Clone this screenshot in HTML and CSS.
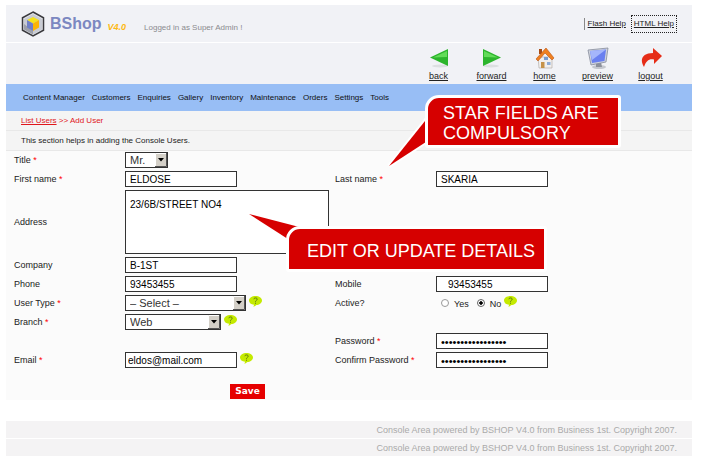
FILE: index.html
```html
<!DOCTYPE html>
<html lang="en">
<head>
<meta charset="utf-8">
<title>BShop - Add User</title>
<link rel="stylesheet" href="styles.css">
</head>
<body>
<svg class="defs" aria-hidden="true">
  <symbol id="tip" viewBox="0 0 13 11">
    <path d="M6.500 0C10 0 13 1.800 13 4.500S10 9 7.500 9L4.500 11 5 8.800C2 8.500 0 6.800 0 4.500 0 1.800 3 0 6.500 0z" fill="#c4ea00"/>
    <path d="M4.800 3.200C5 1.500 8.300 1.500 8.200 3.300 8.100 4.300 6.500 4.500 6.500 5.700M6.500 6.700v1" fill="none" stroke="#5b7a10" stroke-width="1"/>
  </symbol>
  <symbol id="arrow" viewBox="0 0 12 14">
    <path d="M0 0h12v14H0z" fill="#d4d0c8"/>
    <path d="M.5 13V.5H11" fill="none" stroke="#fff"/>
    <path d="M11.500 0v13.500H0" fill="none" stroke="#555"/>
    <path d="M3 5h6L6 8.500z" fill="#000"/>
  </symbol>
</svg>
<header class="header">
  <svg class="logo" viewBox="0 0 24 26" aria-hidden="true">
    <path d="M12 1l10.500 5.800v12.400L12 25 1.500 19.200V6.800z" fill="#e4e6ea" stroke="#3a3a3e" stroke-width="1.500"/>
    <path d="M3 8l9-5 9 5v10.500l-9 5-9-5z" fill="#c9ccd4"/>
    <path d="M3 13l9 7v3.500l-9-5z" fill="#9da0aa"/>
    <path d="M12 6l6 3-6 3.500L6 9z" fill="#f5e31c"/>
    <path d="M6 9l6 3.500V20l-6-3.500z" fill="#6f7fc6"/>
    <path d="M18 9l-6 3.500V20l6-3.500z" fill="#fbb404"/>
  </svg>
  <h1 class="brand">BShop</h1>
  <span class="version">V4.0</span>
  <span class="login">Logged in as Super Admin !</span>
  <div class="help">
    <a href="#flash">Flash Help</a>
    <a class="focused" href="#html">HTML Help</a>
  </div>
</header>
<div class="toolbar">
  <a class="tool" href="#back">
    <svg class="icon" viewBox="0 0 22 22" aria-hidden="true"><ellipse cx="12" cy="19" rx="8" ry="1.500" fill="#dcdfe1"/><path d="M20 2v17L2 10.500z" fill="#2cb52c"/><path d="M19 4v6L5 10.500z" fill="#62dc58"/></svg>back</a>
  <a class="tool" href="#forward">
    <svg class="icon" viewBox="0 0 22 22" aria-hidden="true"><ellipse cx="10" cy="19" rx="8" ry="1.500" fill="#dcdfe1"/><path d="M2 2v17l18-8.500z" fill="#2cb52c"/><path d="M3 4v6l14 .5z" fill="#62dc58"/></svg>forward</a>
  <a class="tool" href="#home">
    <svg class="icon" viewBox="0 0 22 22" aria-hidden="true"><path d="M4 10h14v11H5z" fill="#f1efed" stroke="#b5afaa" stroke-width=".7"/><path d="M5 2h3v5H5z" fill="#a84b14"/><path d="M12 1l8 10-2 2-7-7-7 8-2-2z" fill="#ef8021" stroke="#bb5515" stroke-width=".6"/><path d="M10 10h4v3h-4z" fill="#779bd0"/><path d="M7 15h3.500v6H7z" fill="#c59249"/><path d="M13 15h3.500v3H13z" fill="#8cacd8"/></svg>home</a>
  <a class="tool" href="#preview">
    <svg class="icon" viewBox="0 0 22 22" aria-hidden="true"><ellipse cx="12" cy="20" rx="7" ry="2" fill="#c4c7ce"/><path d="M9 15l5 0 1 5H9z" fill="#8c909b"/><path d="M1 3l20-2-2 14L4 18z" fill="#cfd3dc" stroke="#858b9c" stroke-width=".8"/><path d="M3 4l16-1.500L17.500 14 5 16z" fill="#6a80f0"/><path d="M3 4l16-1.500L5 13z" fill="#a5b6fb"/></svg>preview</a>
  <a class="tool" href="#logout">
    <svg class="icon" viewBox="0 0 22 22" aria-hidden="true"><path d="M13 1l9 8-8 8v-4.500C9 11.500 6 14 4 20-1 12 3 6 13 6z" fill="#e62d17"/></svg>logout</a>
</div>
<nav class="nav">
  <a href="#content">Content Manager</a>
  <a href="#customers">Customers</a>
  <a href="#enquiries">Enquiries</a>
  <a href="#gallery">Gallery</a>
  <a href="#inventory">Inventory</a>
  <a href="#maintenance">Maintenance</a>
  <a href="#orders">Orders</a>
  <a href="#settings">Settings</a>
  <a href="#tools">Tools</a>
</nav>
<p class="strip crumbs"><a href="#list">List Users</a> &gt;&gt; Add User</p>
<p class="strip">This section helps in adding the Console Users.</p>
<main class="main">
  <form class="form">
    <label class="first" for="title">Title <b>*</b></label>
    <div class="field wide"><span class="pick short"><select id="title"><option>Mr.</option></select><svg><use href="#arrow"/></svg></span></div>

    <label class="first" for="fname">First name <b>*</b></label>
    <div class="field"><input id="fname" type="text" value="ELDOSE"></div>
    <label for="lname">Last name <b>*</b></label>
    <div class="field"><input id="lname" type="text" value="SKARIA"></div>

    <label class="first" for="address">Address</label>
    <div class="field wide"><textarea id="address">23/6B/STREET NO4</textarea></div>

    <label class="first" for="company">Company</label>
    <div class="field wide"><input id="company" type="text" value="B-1ST"></div>

    <label class="first" for="phone">Phone</label>
    <div class="field"><input id="phone" type="text" value="93453455"></div>
    <label for="mobile">Mobile</label>
    <div class="field"><input id="mobile" class="indent" type="text" value="93453455"></div>

    <label class="first" for="type">User Type <b>*</b></label>
    <div class="field"><span class="pick long"><select id="type"><option>– Select –</option></select><svg><use href="#arrow"/></svg></span><svg class="tip"><use href="#tip"/></svg></div>
    <span id="active">Active?</span>
    <div class="field radios" role="radiogroup" aria-labelledby="active">
      <input id="yes" type="radio" name="active"><label for="yes">Yes</label>
      <input id="no" type="radio" name="active" checked><label for="no">No</label>
      <svg class="tip"><use href="#tip"/></svg>
    </div>

    <label class="first" for="branch">Branch <b>*</b></label>
    <div class="field wide"><span class="pick medium"><select id="branch"><option>Web</option></select><svg><use href="#arrow"/></svg></span><svg class="tip"><use href="#tip"/></svg></div>

    <label class="third" for="pass">Password <b>*</b></label>
    <div class="field"><input id="pass" type="password" value="*****************"></div>

    <label class="first" for="email">Email <b>*</b></label>
    <div class="field"><input id="email" class="tight" type="text" value="eldos@mail.com"><svg class="tip"><use href="#tip"/></svg></div>
    <label for="confirm">Confirm Password <b>*</b></label>
    <div class="field"><input id="confirm" type="password" value="*****************"></div>

    <div class="actions"><button type="submit">Save</button></div>
  </form>
  <div class="callout star">
    <svg class="tail" viewBox="0 0 40 50" aria-hidden="true"><path d="M0 48L40 -2V22z" fill="#d60000" stroke="#fff" stroke-width="4" paint-order="stroke"/></svg>
    <div class="bubble">STAR FIELDS ARE<br>COMPULSORY</div>
  </div>
  <div class="callout edit">
    <svg class="tail" viewBox="0 0 60 30" aria-hidden="true"><path d="M0 0L58 15 42 27z" fill="#d60000"/></svg>
    <div class="bubble">EDIT OR UPDATE DETAILS</div>
  </div>
</main>
<footer class="footer">
  <p>Console Area powered by BSHOP V4.0 from Business 1st. Copyright 2007.</p>
  <p>Console Area powered by BSHOP V4.0 from Business 1st. Copyright 2007.</p>
</footer>
</body>
</html>
```
FILE: styles.css
```css
* { box-sizing: border-box; }
body {
  margin: 5px 10px 4px 6px;
  background: #fff;
  color: #222;
  font: 9px/12px "Liberation Sans", Arial, sans-serif;
}
h1, p { margin: 0; }
a { color: inherit; }
b { color: #f00; font-weight: normal; }
.defs { display: none; }

.header {
  display: flex;
  align-items: center;
  height: 38px;
  padding: 0 14px 0 15px;
  background: #f1f2f6;
  border-bottom: 1px solid #fff;
  font-size: 8px;
}
.logo { width: 24px; height: 26px; }
.brand { margin-left: 5px; color: #7c88c1; font-size: 16px; line-height: 20px; }
.version { margin: 6px 0 0 6px; color: #fdb913; font-size: 9px; font-weight: bold; font-style: italic; }
.login { margin: 8px 0 0 18px; color: #8b8b8f; }
.help { display: flex; gap: 8px; margin-left: auto; border-left: 1px solid #888; padding: 0 4px 0 3px; }
.help .focused { outline: 1px dotted #222; outline-offset: 2px; }

.toolbar {
  display: flex;
  justify-content: flex-end;
  height: 41px;
  padding: 3px 15px 0 0;
  background: #f1f2f6;
}
.tool { display: flex; flex-direction: column; align-items: center; width: 53px; }
.icon { width: 22px; height: 24px; }

.nav {
  display: flex;
  align-items: center;
  gap: 7px;
  height: 27px;
  padding-left: 17px;
  background: #98bef5;
  color: #111;
  font-size: 8px;
}
.nav a { text-decoration: none; }

.strip { height: 20px; padding: 4px 15px; background: #f4f4f4; border-bottom: 1px solid #e8e8e8; font-size: 8px; }
.crumbs { color: #e0161c; }

.main { position: relative; background: #fbfbfb; }
.form {
  display: grid;
  grid-template-columns: 111px 210px 101px 1fr;
  grid-auto-rows: minmax(16px, auto);
  gap: 3px 0;
  align-items: center;
  padding: 1px 8px;
}
.first { grid-column: 1; }
.third { grid-column: 3; }
.wide { grid-column: span 3; }
.field { display: flex; align-items: center; }
.field input, textarea, select {
  margin: 0;
  border: 1px solid #333;
  border-radius: 0;
  background: #fff;
  color: #000;
  font: 10px/12px "Liberation Sans", Arial, sans-serif;
}
.field input { width: 112px; height: 16px; padding: 0 4px; }
.field .indent { padding-left: 11px; }
.field .tight { padding-left: 2px; }
.field input[type="password"] { padding-top: 2px; font-size: 11px; }
textarea { display: block; width: 204px; height: 64px; padding: 8px 4px; resize: none; }
.pick { display: flex; position: relative; }
.pick select { width: 100%; height: 16px; padding: 0 4px; appearance: none; color: #333; font-size: 11px; }
.pick svg { position: absolute; top: 1px; right: 1px; width: 12px; height: 14px; pointer-events: none; }
.short { width: 43px; }
.medium { width: 96px; }
.long { width: 121px; }
.tip { width: 13px; height: 11px; margin: 0 0 3px 3px; }
.radios { padding-left: 5px; }
.radios label { margin: 2px 8px 0 5px; }
.radios .tip { margin-left: -5px; }
.field input[type="radio"] {
  appearance: none;
  width: 8px;
  height: 8px;
  padding: 0;
  border: 1px solid #999;
  border-radius: 50%;
}
.field input[type="radio"]:checked { background: radial-gradient(#000 35%, #fff 45%); border-color: #666; }
.actions { grid-column: 1 / -1; padding: 13px 0 0 216px; }
button {
  display: block;
  width: 35px;
  height: 15px;
  padding: 0;
  border: 0;
  background: #e60000;
  color: #fff;
  font: bold 9px/15px "DejaVu Sans", Verdana, sans-serif;
}

.callout { position: absolute; }
.bubble {
  position: relative;
  padding: 12px 18px 8px;
  border: 3px solid #fff;
  border-radius: 14px 3px 3px 3px;
  background: #d60000;
  color: #fff;
  font: 18px/20px "Liberation Sans", Arial, sans-serif;
  white-space: nowrap;
}
.tail { position: absolute; overflow: visible; }
.star { top: -56px; left: 419px; }
.star .bubble { width: 196px; padding: 5px 15px 2px; }
.star .tail { top: 23px; left: -36px; width: 40px; height: 50px; }
.edit { top: 75px; left: 280px; }
.edit .bubble { width: 261px; }
.edit .tail { top: -12px; left: -37px; width: 60px; height: 30px; }

.footer { margin-top: 21px; color: #aaa; text-align: right; }
.footer p { height: 18px; padding: 3px 15px; background: #f4f3f4; border-bottom: 1px solid #fff; }
```
